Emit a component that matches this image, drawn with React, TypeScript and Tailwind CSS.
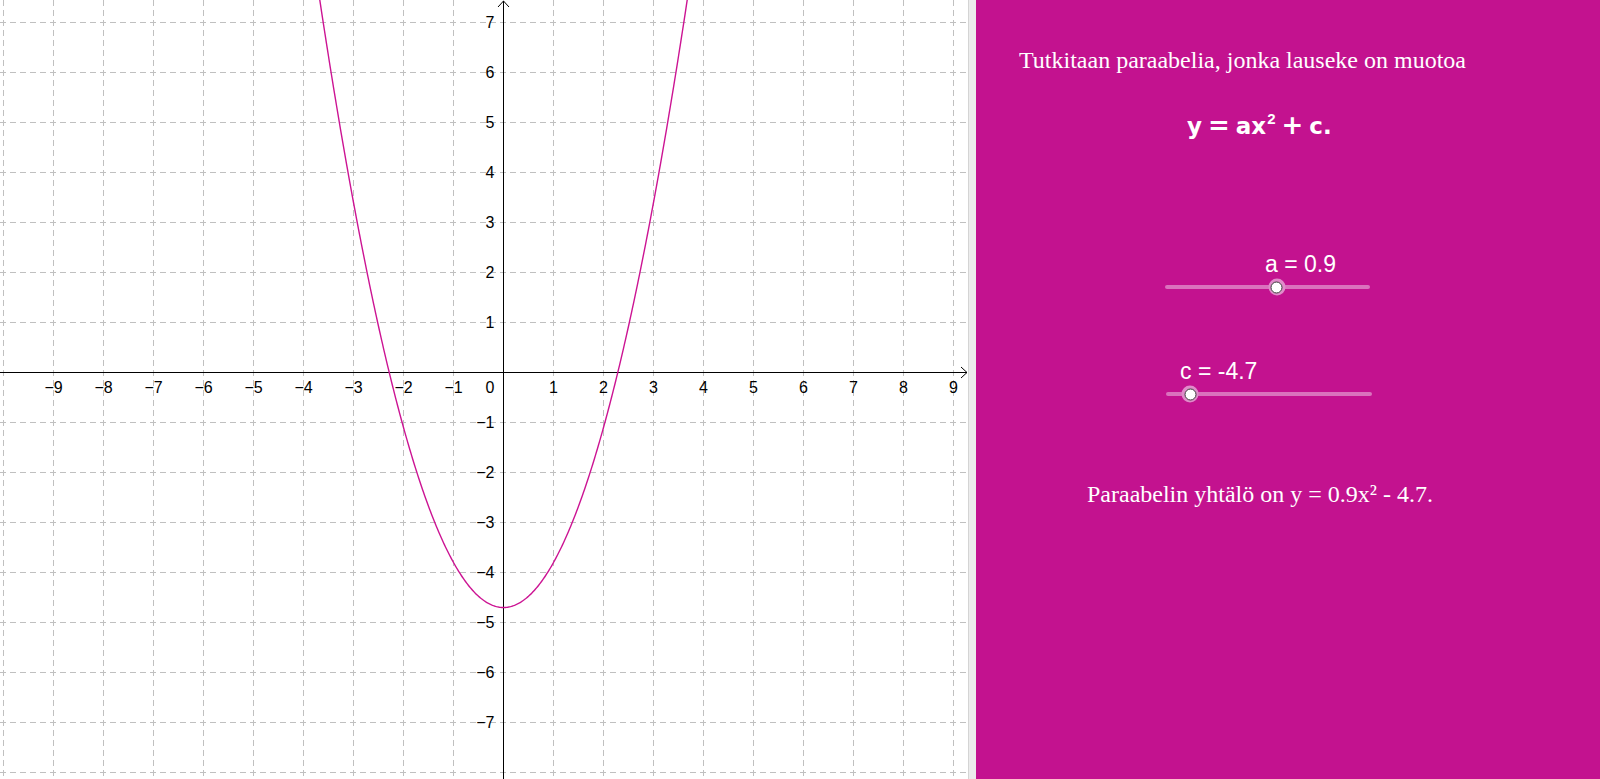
import React from 'react';

const OX = 503.5;
const OY = 372.5;
const UNIT = 50;
const W = 968;
const H = 779;

const A = 0.9;
const C = -4.7;

const parabolaPath = () => {
  const pts: string[] = [];
  for (let x = -3.9; x <= 3.9001; x += 0.02) {
    const px = OX + x * UNIT;
    const py = OY - (A * x * x + C) * UNIT;
    pts.push(`${pts.length ? 'L' : 'M'}${px.toFixed(2)},${py.toFixed(2)}`);
  }
  return pts.join(' ');
};

const minus = (n: number) => (n < 0 ? `\u2212${Math.abs(n)}` : `${n}`);

const GraphicsView = () => {
  const vx = Array.from({ length: 20 }, (_, k) => 3.5 + k * UNIT);
  const hy = Array.from({ length: 16 }, (_, k) => 22.5 + k * UNIT);
  const xs = [-9, -8, -7, -6, -5, -4, -3, -2, -1, 1, 2, 3, 4, 5, 6, 7, 8, 9];
  const ys = [-7, -6, -5, -4, -3, -2, -1, 1, 2, 3, 4, 5, 6, 7];

  return (
    <svg width={W} height={H} className="block shrink-0 bg-white font-['Liberation_Sans',Arial,sans-serif]">
      <g stroke="#c0c0c0" strokeWidth={1} strokeDasharray="6 4">
        {vx.map((x) => (
          <line key={`v${x}`} x1={x} y1={0} x2={x} y2={H} />
        ))}
        {hy.map((y) => (
          <line key={`h${y}`} x1={0} y1={y} x2={W} y2={y} />
        ))}
      </g>

      {/* axes */}
      <g stroke="#000" strokeWidth={1} fill="none">
        <line x1={0} y1={OY} x2={W - 1} y2={OY} />
        <line x1={OX} y1={H} x2={OX} y2={1} />
        <polyline points={`${W - 7},${OY - 5.5} ${W - 1},${OY} ${W - 7},${OY + 5.5}`} />
        <polyline points={`${OX - 5.5},7 ${OX},1 ${OX + 5.5},7`} />
      </g>

      <g fontSize={16} fill="#000">
        {xs.map((n) => (
          <text key={`xl${n}`} x={OX + n * UNIT} y={393} textAnchor="middle">
            {minus(n)}
          </text>
        ))}
        <text x={494.5} y={393} textAnchor="end">
          0
        </text>
        {ys.map((n) => (
          <text key={`yl${n}`} x={494.5} y={OY - n * UNIT + 5.8} textAnchor="end">
            {minus(n)}
          </text>
        ))}
      </g>

      <path d={parabolaPath()} fill="none" stroke="#cc1493" strokeWidth={1.4} />
    </svg>
  );
};

type SliderProps = {
  name: string;
  value: number;
  min: number;
  max: number;
  className: string;
  labelClass: string;
  trackClass: string;
};

const Slider = ({ name, value, min, max, className, labelClass, trackClass }: SliderProps) => {
  const pct = ((value - min) / (max - min)) * 100;
  return (
    <div className={className}>
      <div className={`h-[26px] leading-[26px] text-[23px] text-white whitespace-nowrap font-['Liberation_Sans',Arial,sans-serif] ${labelClass}`}>
        {name} = {value}
      </div>
      <div className={`relative mt-[8px] h-[4px] rounded-full bg-[#da72bd] ${trackClass}`}>
        <div
          className="absolute top-1/2 -translate-x-1/2 -translate-y-1/2 w-[17px] h-[17px] rounded-full bg-[#e08cca] flex items-center justify-center"
          style={{ left: `${pct}%` }}
        >
          <div className="w-[12px] h-[12px] rounded-full bg-white border-[1.5px] border-[#3a3a3a]" />
        </div>
      </div>
    </div>
  );
};

export default function App() {
  return (
    <div className="flex w-[1600px] h-[779px] overflow-hidden bg-white">
      <GraphicsView />
      <div className="w-[8px] shrink-0 bg-[#ececec] border-l border-[#d4d4d4]" />
      <div className="flex-1 bg-[#c3128f] flex flex-col pt-[46px] text-white">
        <p className="ml-[43px] h-[28px] leading-[28px] text-[24px] whitespace-nowrap font-['Liberation_Serif','Times_New_Roman',serif]">
          Tutkitaan paraabelia, jonka lauseke on muotoa
        </p>

        <div className="mt-[37px] ml-[211px] h-[28px] leading-[28px] text-[23px] font-bold flex items-baseline whitespace-nowrap font-['DejaVu_Sans',sans-serif]">
          <span>y</span>
          <span className="mx-[6px] text-[26px]">=</span>
          <span>ax</span>
          <span className="text-[15px] relative -top-[10px] ml-[1px] font-['Liberation_Sans',sans-serif]">2</span>
          <span className="mx-[6px] text-[26px]">+</span>
          <span>c.</span>
        </div>

        <Slider name="a" value={0.9} min={-10} max={10} className="mt-[112px]" labelClass="ml-[289px]" trackClass="ml-[189px] w-[205px]" />
        <Slider name="c" value={-4.7} min={-6} max={5} className="mt-[69px]" labelClass="ml-[204px]" trackClass="ml-[190px] w-[206px]" />

        <p className="mt-[84px] ml-[111px] h-[28px] leading-[28px] text-[24px] whitespace-nowrap font-['Liberation_Serif','Times_New_Roman',serif]">
          Paraabelin yhtälö on y = 0.9x² - 4.7.
        </p>
      </div>
    </div>
  );
}
